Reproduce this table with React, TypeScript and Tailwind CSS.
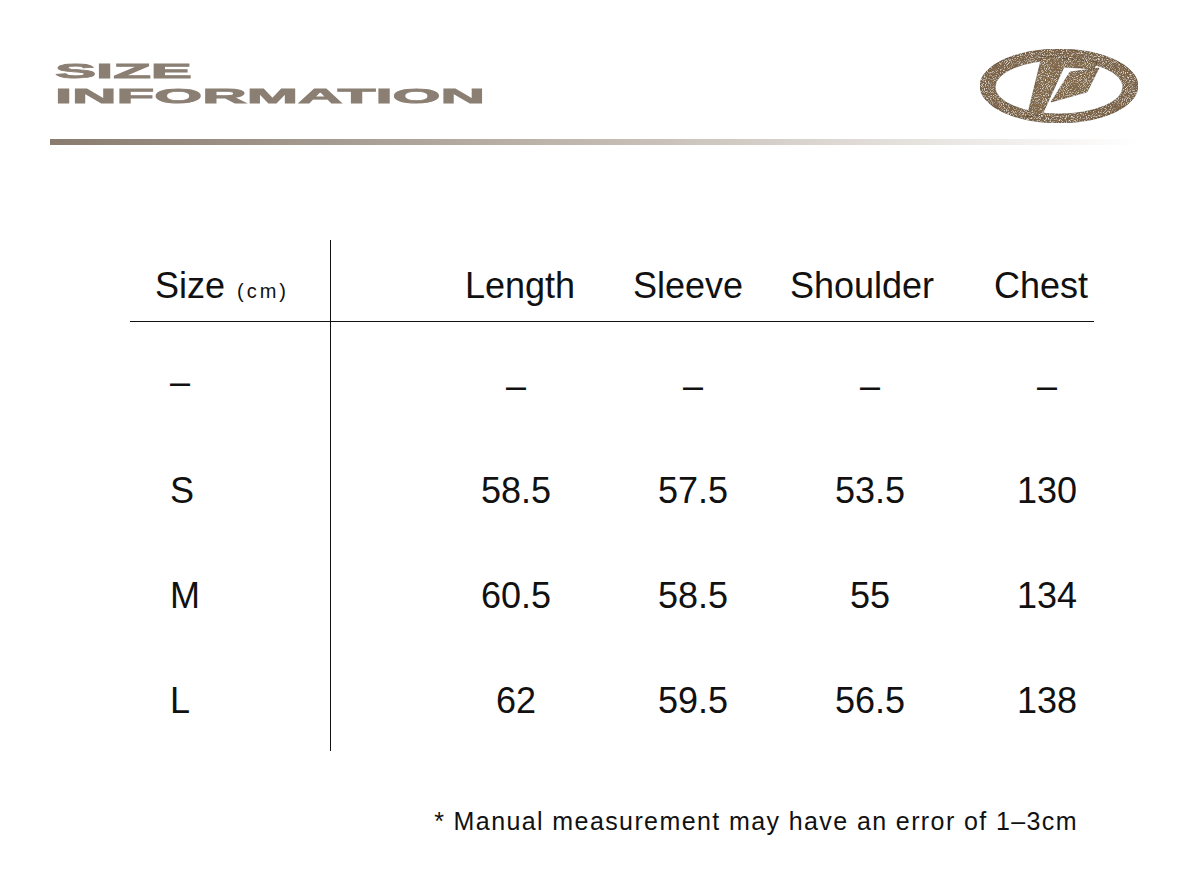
import React from 'react';

const columns = ['Length', 'Sleeve', 'Shoulder', 'Chest'];

const rows = [
  { size: '–', values: ['–', '–', '–', '–'] },
  { size: 'S', values: ['58.5', '57.5', '53.5', '130'] },
  { size: 'M', values: ['60.5', '58.5', '55', '134'] },
  { size: 'L', values: ['62', '59.5', '56.5', '138'] },
];

// header cells are not on the same centres as the data below them
const headerOffsets = ['ml-[114px]', 'ml-[18px]', 'ml-[24px]', 'ml-[29px]'];

const Logo = () => (
  <svg width="168" height="80" viewBox="0 0 168 80">
    <defs>
      <filter id="grain" x="0" y="0" width="100%" height="100%">
        <feTurbulence type="fractalNoise" baseFrequency="0.95" numOctaves="2" seed="7" result="noise" />
        <feColorMatrix
          in="noise"
          type="matrix"
          values="0 0 0 0 0.8  0 0 0 0 0.76  0 0 0 0 0.7  3.2 0 0 0 -1.6"
          result="spots"
        />
        <feComposite in="spots" in2="SourceGraphic" operator="in" result="grainy" />
        <feMerge>
          <feMergeNode in="SourceGraphic" />
          <feMergeNode in="grainy" />
        </feMerge>
      </filter>
    </defs>
    <g filter="url(#grain)" stroke="#4a3a27" strokeWidth="0.8" strokeOpacity="0.75">
      <path
        fillRule="evenodd"
        fill="#7c6446"
        d="M4,40 a79,37 0 1,0 158,0 a79,37 0 1,0 -158,0 Z M19,41 a64,27 0 1,0 128,0 a64,27 0 1,0 -128,0 Z"
      />
      <polygon fill="#80684a" points="66,10 121,16 118,23 88,21 66,69 51,71" />
      <polygon fill="#80684a" points="94,26 123,22 111,46 75,56" />
    </g>
  </svg>
);

const App = () => {
  return (
    <div className="w-[1200px] h-[880px] bg-white font-['Liberation_Sans',Arial,sans-serif] text-[#111]">
      <div className="flex h-[139px] justify-between">
        <div className="ml-[55px] mt-[59px] font-bold text-[20px] leading-[25px] text-[#8b7f73] origin-left scale-x-[3.08] [-webkit-text-stroke:0.8px_#8b7f73]">
          <div>SIZE</div>
          <div>INFORMATION</div>
        </div>
        <div className="mr-[56px] mt-[46px]">
          <Logo />
        </div>
      </div>

      <div className="ml-[50px] h-[6px] w-[1090px] bg-gradient-to-r from-[#897c6f] via-[#c2b9b0] to-white" />

      <div className="ml-[130px] mt-[95px] w-[964px]">
        <div className="flex h-[82px] border-b border-[#111] text-[36px] leading-[40px]">
          <div className="w-[201px] shrink-0 border-r border-[#111] pl-[25px] pt-[26px] whitespace-nowrap">
            Size<span className="ml-[12px] text-[20px] tracking-[3px]">(cm)</span>
          </div>
          {columns.map((col, i) => (
            <div key={col} className={`${headerOffsets[i]} w-[150px] shrink-0 pt-[26px] text-center whitespace-nowrap`}>
              {col}
            </div>
          ))}
        </div>

        <div className="flex text-[36px] leading-[105px]">
          <div className="h-[429px] w-[201px] shrink-0 border-r border-[#111] pl-[40px] pt-[11px]">
            {rows.map((row, i) => (
              <div key={row.size} className={i === 0 ? 'h-[105px] -translate-y-[4px]' : 'h-[105px]'}>
                {row.size}
              </div>
            ))}
          </div>
          <div className="pl-[135px] pt-[11px]">
            {rows.map((row) => (
              <div key={row.size} className="flex h-[105px] gap-[77px]">
                {row.values.map((v, j) => (
                  <div key={j} className="w-[100px] shrink-0 text-center">
                    {v}
                  </div>
                ))}
              </div>
            ))}
          </div>
        </div>
      </div>

      <div className="mt-[54px] flex justify-end pr-[122px] text-[25px] leading-[28px] tracking-[1.4px]">
        * Manual measurement may have an error of 1–3cm
      </div>
    </div>
  );
};

export default App;
